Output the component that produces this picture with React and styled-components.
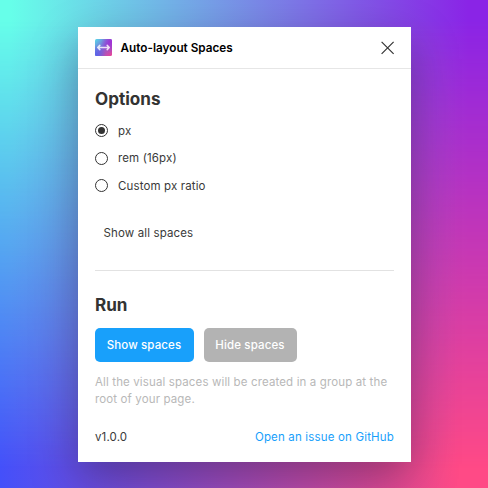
import React from 'react';
import styled, { createGlobalStyle } from 'styled-components';

const GlobalStyle = createGlobalStyle`
  *, *::before, *::after { box-sizing: border-box; }
  body { margin: 0; font-family: Inter, "Liberation Sans", sans-serif; }
  h1, h2, p { margin: 0; }
`;

const Backdrop = styled.main`
  position: relative;
  z-index: 0;
  width: 488px;
  height: 488px;
  padding: 27px 77px 26px 78px;
  overflow: hidden;
  background: linear-gradient(90deg, #4450fa 0%, #ff4a86 94%);

  &::before {
    content: '';
    position: absolute;
    inset: 0;
    z-index: -1;
    background: linear-gradient(90deg, #66ffe9 2%, #8a24e6 96%);
    mask-image: linear-gradient(180deg, #000 4%, transparent 96%);
  }
`;

const Panel = styled.section`
  display: flex;
  flex-direction: column;
  width: 333px;
  height: 435px;
  background: #fff;
  color: #3a3a3a;
  font-size: 11.5px;
  letter-spacing: 0.13px;
  box-shadow: 0 17px 42px rgba(20, 10, 30, 0.34);
`;

const Header = styled.header`
  display: flex;
  align-items: center;
  height: 42px;
  flex: none;
  padding: 0 16px 0 17px;
  border-bottom: 1px solid #e6e6e6;
`;

const Title = styled.h1`
  flex: 1;
  margin-top: 1px;
  margin-left: 8.5px;
  color: #000;
  font-size: 11.75px;
  font-weight: 600;
  line-height: 17px;
  letter-spacing: 0;
`;

const CloseButton = styled.button`
  display: flex;
  padding: 0;
  border: 0;
  background: none;
`;

const Body = styled.div`
  display: flex;
  flex-direction: column;
  flex: 1;
  padding: 17px 17px 0;
`;

const Heading = styled.h2`
  color: #333;
  font-size: 17.1px;
  font-weight: 700;
  line-height: 25px;
  letter-spacing: 0;
`;

const RadioList = styled.div`
  display: flex;
  flex-direction: column;
  margin-top: 6px;
`;

const RadioRow = styled.div`
  display: flex;
  align-items: center;
  gap: 10px;
  height: 27.6px;
`;

const RadioMark = styled.span`
  display: grid;
  place-items: center;
  width: 13px;
  height: 13px;
  border: 1.3px solid #333;
  border-radius: 50%;

  &::after {
    content: '';
    width: 7px;
    height: 7px;
    border-radius: 50%;
    background: ${({ $checked }) => ($checked ? '#333' : 'transparent')};
  }
`;

const SwitchLabel = styled.p`
  margin: 25px 0 0 8.5px;
  line-height: 17px;
`;

const Divider = styled.hr`
  width: 100%;
  height: 1px;
  margin: 28px 0 21px;
  border: 0;
  background: #e2e2e2;
`;

const Actions = styled.div`
  display: flex;
  gap: 10px;
  margin-top: 11px;
`;

const ActionButton = styled.button`
  width: ${({ $width }) => $width}px;
  height: 34px;
  padding: 1px 1px 0 0;
  border: 0;
  border-radius: 5px;
  background: ${({ $primary }) => ($primary ? '#18a0fb' : '#b3b3b3')};
  color: #fff;
  font: 500 11.5px Inter, "Liberation Sans", sans-serif;
  letter-spacing: 0.13px;
`;

const Hint = styled.p`
  margin-top: 12px;
  color: #b8b8b8;
  line-height: 17px;
  white-space: nowrap;
`;

const Footer = styled.footer`
  display: flex;
  justify-content: space-between;
  margin-top: 21px;
  line-height: 17px;
`;

const IssueLink = styled.a`
  color: #18a0fb;
  letter-spacing: 0.17px;
`;

const LogoIcon = () => (
  <svg width="17" height="17" viewBox="0 0 17 17" fill="none" aria-hidden="true">
    <defs>
      <linearGradient id="logoFill" x1="0" y1="0" x2="17" y2="17" gradientUnits="userSpaceOnUse">
        <stop stopColor="#55dce9" />
        <stop offset="0.5" stopColor="#8260d5" />
        <stop offset="1" stopColor="#ed4396" />
      </linearGradient>
      <radialGradient id="logoViolet" cx="17" cy="3" r="11" gradientUnits="userSpaceOnUse">
        <stop stopColor="#a22fd5" />
        <stop offset="1" stopColor="#a22fd5" stopOpacity="0" />
      </radialGradient>
      <radialGradient id="logoBlue" cx="0" cy="17" r="11" gradientUnits="userSpaceOnUse">
        <stop stopColor="#5364ec" />
        <stop offset="1" stopColor="#5364ec" stopOpacity="0" />
      </radialGradient>
    </defs>
    <rect width="17" height="17" rx="1.5" fill="url(#logoFill)" />
    <rect width="17" height="17" rx="1.5" fill="url(#logoViolet)" />
    <rect width="17" height="17" rx="1.5" fill="url(#logoBlue)" />
    <path d="M2.7 8.5h11.6M4.8 6.4 2.7 8.5l2.1 2.1M12.2 6.4l2.1 2.1-2.1 2.1" stroke="#fff" strokeOpacity="0.82" strokeWidth="1.5" strokeLinecap="round" strokeLinejoin="round" />
  </svg>
);

const CloseIcon = () => (
  <svg width="14" height="14" viewBox="0 0 14 14" fill="none" aria-hidden="true">
    <path d="M.6.9l12 12M12.6.9l-12 12" stroke="#333" strokeWidth="1.15" />
  </svg>
);

const options = ['px', 'rem (16px)', 'Custom px ratio'];

export default function App() {
  return (
    <>
      <GlobalStyle />
      <Backdrop>
        <Panel>
          <Header>
            <LogoIcon />
            <Title>Auto-layout Spaces</Title>
            <CloseButton aria-label="Close"><CloseIcon /></CloseButton>
          </Header>
          <Body>
            <Heading>Options</Heading>
            <RadioList role="radiogroup">
              {options.map((label, index) => (
                <RadioRow key={label} role="radio" aria-checked={index === 0}>
                  <RadioMark $checked={index === 0} />
                  {label}
                </RadioRow>
              ))}
            </RadioList>
            <SwitchLabel>Show all spaces</SwitchLabel>
            <Divider />
            <Heading>Run</Heading>
            <Actions>
              <ActionButton $primary $width={99}>Show spaces</ActionButton>
              <ActionButton $width={93}>Hide spaces</ActionButton>
            </Actions>
            <Hint>All the visual spaces will be created in a group at the<br />root of your page.</Hint>
            <Footer>
              <span>v1.0.0</span>
              <IssueLink>Open an issue on GitHub</IssueLink>
            </Footer>
          </Body>
        </Panel>
      </Backdrop>
    </>
  );
}
